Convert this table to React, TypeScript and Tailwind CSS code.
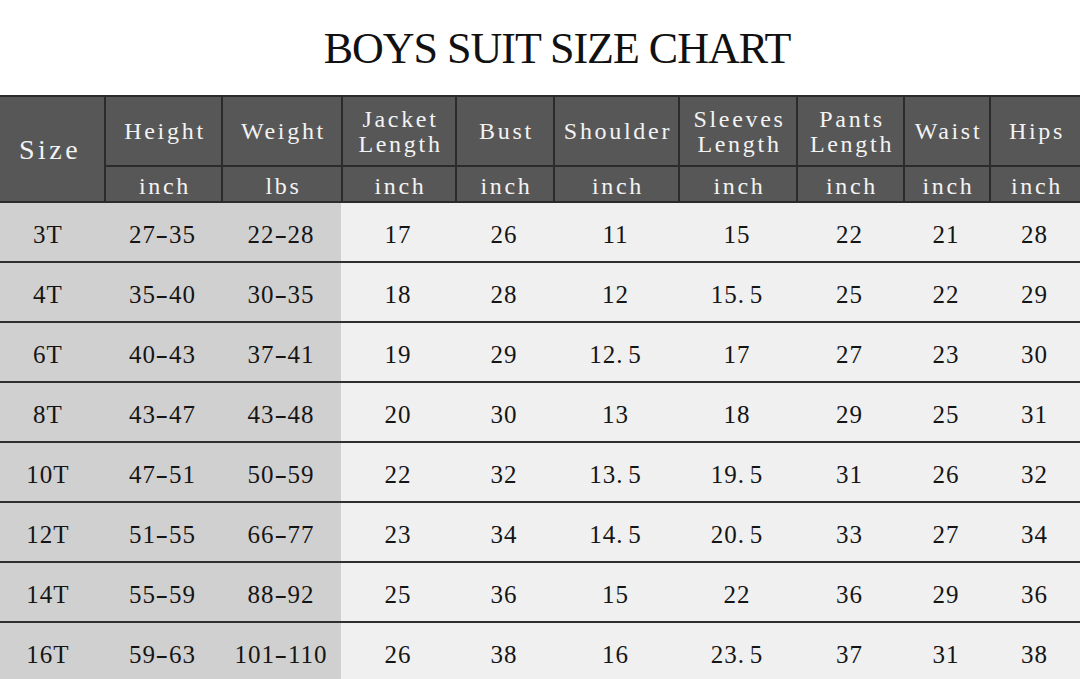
import React from "react";

const cols = "grid-cols-[104px_117px_120px_114px_98px_125px_118px_107px_86px_91px]";

const headers: string[][] = [
  ["Height"],
  ["Weight"],
  ["Jacket", "Length"],
  ["Bust"],
  ["Shoulder"],
  ["Sleeves", "Length"],
  ["Pants", "Length"],
  ["Waist"],
  ["Hips"],
];
const units = ["inch", "lbs", "inch", "inch", "inch", "inch", "inch", "inch", "inch"];

const rows: string[][] = [
  ["3T", "27-35", "22-28", "17", "26", "11", "15", "22", "21", "28"],
  ["4T", "35-40", "30-35", "18", "28", "12", "15.5", "25", "22", "29"],
  ["6T", "40-43", "37-41", "19", "29", "12.5", "17", "27", "23", "30"],
  ["8T", "43-47", "43-48", "20", "30", "13", "18", "29", "25", "31"],
  ["10T", "47-51", "50-59", "22", "32", "13.5", "19.5", "31", "26", "32"],
  ["12T", "51-55", "66-77", "23", "34", "14.5", "20.5", "33", "27", "34"],
  ["14T", "55-59", "88-92", "25", "36", "15", "22", "36", "29", "36"],
  ["16T", "59-63", "101-110", "26", "38", "16", "23.5", "37", "31", "38"],
];

function fmt(s: string) {
  const parts: React.ReactNode[] = [];
  let buf = "";
  s.split("").forEach((ch, i) => {
    if (ch === "-") {
      if (buf) parts.push(buf);
      buf = "";
      parts.push(
        <span key={i} className="inline-block w-[13px] text-center scale-x-150">
          -
        </span>
      );
    } else if (ch === ".") {
      if (buf) parts.push(buf);
      buf = "";
      parts.push(
        <span key={i} className="inline-block w-[12px] text-left">
          .
        </span>
      );
    } else {
      buf += ch;
    }
  });
  if (buf) parts.push(buf);
  return parts;
}

const serif = { fontFamily: '"Liberation Serif", "Times New Roman", serif' };

export default function App() {
  return (
    <div className="w-[1080px] h-[679px] overflow-hidden bg-white">
      <div className="h-[95px] flex items-center justify-center pt-[2px] pl-[34px]">
        <h1 className="text-[44px] text-[#111] tracking-[-1px] leading-none" style={serif}>
          BOYS SUIT SIZE CHART
        </h1>
      </div>

      {/* header */}
      <div
        className={`grid ${cols} grid-rows-[70px_34px] bg-[#575757] border-t-2 border-b-2 border-[#2b2b2b] text-[#f3f3f3] text-[24px] tracking-[2.7px]`}
        style={serif}
      >
        <div className="row-span-2 flex items-center justify-center pr-[4px] text-[28px] tracking-[3.5px] pt-[2px]">
          Size
        </div>
        {headers.map((h, i) => (
          <div
            key={i}
            className="border-l-2 border-b-2 border-[#2b2b2b] flex flex-col items-center justify-center leading-[25px] pt-[1px] pl-[3px]"
          >
            {h.map((line, j) => (
              <span key={j} className="whitespace-nowrap">
                {line}
              </span>
            ))}
          </div>
        ))}
        {units.map((u, i) => (
          <div key={i} className="border-l-2 border-[#2b2b2b] flex items-center justify-center pt-[3px] pl-[3px]">
            {u}
          </div>
        ))}
      </div>

      {/* body */}
      <div className="text-[25px] text-[#151515] tracking-[1px]" style={serif}>
        {rows.map((r, ri) => (
          <div key={ri} className={`grid ${cols} h-[60px] border-b-2 border-[#2f2f2f]`}>
            {r.map((c, ci) => (
              <div
                key={ci}
                className={`flex items-center justify-center pt-[5px] ${
                  ci < 3 ? "bg-[#d1d0d1]" : "bg-[#f0f0f0]"
                } ${ci === 0 ? "pr-[8px]" : ""}`}
              >
                <span>{fmt(c)}</span>
              </div>
            ))}
          </div>
        ))}
      </div>
    </div>
  );
}
